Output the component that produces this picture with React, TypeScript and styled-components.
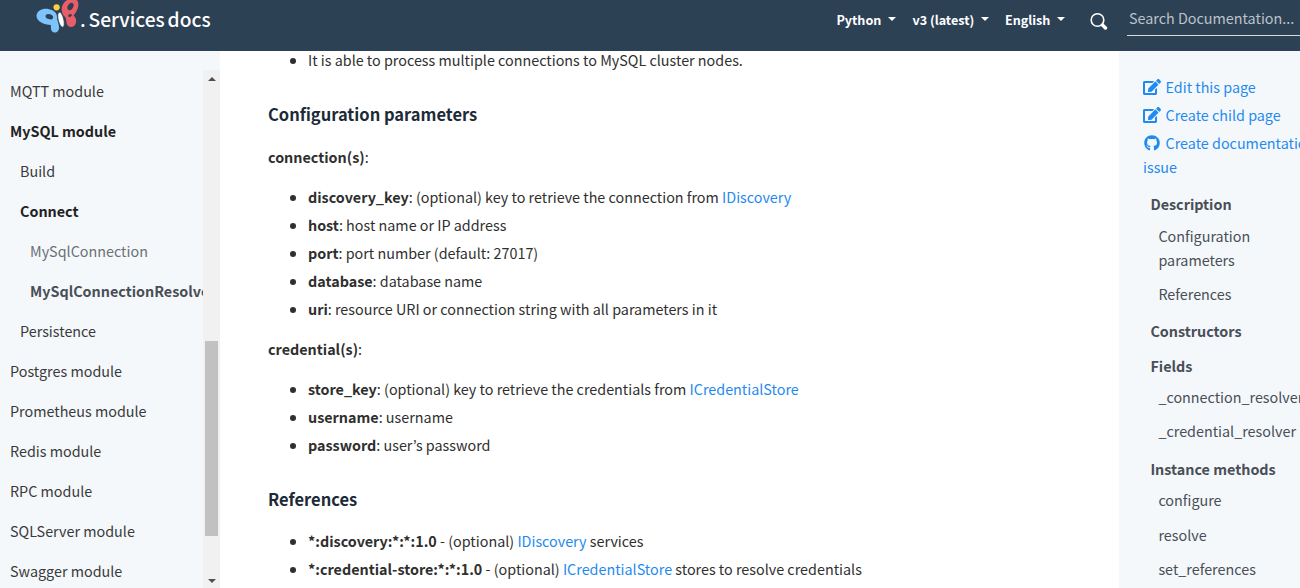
import React from "react";
import styled, { createGlobalStyle } from "styled-components";
import { FaEdit, FaGithub } from "react-icons/fa";

const GlobalStyle = createGlobalStyle`
  * { box-sizing: border-box; }
  body {
    margin: 0;
    overflow: hidden;
    background: #fff;
    color: #2f2f2f;
    font: 400 14.35px/24px "Noto Sans CJK KR", "Noto Sans", sans-serif;
  }
  b { font-weight: 700; }
`;

const Page = styled.div`
  display: flex;
  flex-direction: column;
  width: 1300px;
  height: 588px;
  overflow: hidden;
`;

const Header = styled.header`
  display: flex;
  flex: 0 0 51px;
  align-items: flex-start;
  justify-content: space-between;
  padding-left: 36px;
  background: #2d4155;
  color: #fff;
`;

const Brand = styled.div`
  display: flex;
  align-items: flex-start;
`;

const Logo = styled.svg`
  display: block;
  width: 44px;
  height: 34px;
`;

const BrandName = styled.span`
  font-size: 19.2px;
  font-weight: 500;
  line-height: 24px;
  padding-top: 7px;
  white-space: nowrap;
  word-spacing: -1.5px;
`;

const Tools = styled.div`
  display: flex;
  align-items: flex-start;
  width: 464px;
`;

const Dropdown = styled.div<{ $width: number }>`
  display: flex;
  flex: 0 0 ${(p) => p.$width}px;
  align-items: center;
  padding: 8px 0 0 0.4px;
  font-size: 12.6px;
  font-weight: 700;
  white-space: nowrap;
`;

const Caret = styled.i`
  margin: -2px 0 0 7px;
  border: 4px solid transparent;
  border-top-color: #fff;
  border-bottom: 0;
`;

const SearchIcon = styled.svg`
  flex: none;
  width: 18px;
  height: 18px;
  margin: 12px 19px 0 0;
`;

const SearchField = styled.div`
  flex: 1;
  height: 36px;
  padding: 6px 0 0 2px;
  border-bottom: 1px solid #d5d9dd;
  color: #bcc2c9;
  white-space: nowrap;
`;

const Columns = styled.div`
  display: flex;
  flex: 1;
  min-height: 0;
`;

const Sidebar = styled.aside`
  display: flex;
  flex: 0 0 220px;
  min-width: 0;
  padding-top: 19px;
  background: #f4f8fb;
`;

const NavList = styled.nav`
  flex: 1;
  min-width: 0;
  overflow: hidden;
  padding-top: 1px;
`;

const NavItem = styled.a<{ $level: number; $bold?: boolean }>`
  display: block;
  height: 40px;
  padding-left: ${(p) => 10 + p.$level * 10}px;
  color: ${(p) => (p.$level === 2 ? (p.$bold ? "#494e57" : "#6c7075") : p.$bold ? "#222" : "#3a3a3a")};
  font-weight: ${(p) => (p.$bold ? 700 : 400)};
  line-height: 40px;
  white-space: nowrap;
`;

const Scrollbar = styled.div`
  display: flex;
  flex-direction: column;
  flex: none;
  align-items: center;
  width: 17px;
  background: #f1f1f1;
`;

const Arrow = styled.i<{ $down?: boolean }>`
  margin-top: ${(p) => (p.$down ? "43px" : "7px")};
  border: 4px solid transparent;
  border-${(p) => (p.$down ? "top" : "bottom")}-color: #505050;
  border-${(p) => (p.$down ? "bottom" : "top")}: 0;
`;

const Thumb = styled.div`
  width: 13px;
  height: 195px;
  margin-top: 260px;
  background: #c1c1c1;
`;

const Main = styled.main`
  flex: 1;
  overflow: hidden;
  padding-left: 48px;
`;

const Content = styled.article`
  margin-top: -3px;
`;

const Heading = styled.h3`
  margin: 28px 0 0;
  color: #1d2b38;
  font-size: 16.5px;
  font-weight: 700;
  line-height: 29px;
`;

const Para = styled.p`
  margin: 16px 0;
`;

const List = styled.ul`
  margin: 0;
  padding-left: 40px;
`;

const Item = styled.li`
  margin-bottom: 4px;
  white-space: nowrap;
`;

const References = styled(List)`
  margin-top: 15px;
`;

const Link = styled.a`
  color: #1f8af0;
`;

const Aside = styled.aside`
  flex: 0 0 181px;
  overflow: hidden;
  padding: 24px 0 0 24px;
  background: #f4f8fb;
`;

const Action = styled.a`
  display: block;
  width: 181px;
  margin-bottom: 4px;
  color: #1f8af0;

  svg {
    width: 18px;
    height: 16px;
    margin-right: 4.5px;
    vertical-align: -2px;
  }
`;

const TocEntry = styled.a<{ $title?: boolean; $gap: number }>`
  display: block;
  width: 150px;
  margin-top: ${(p) => p.$gap}px;
  padding-left: ${(p) => (p.$title ? 7.4 : 15.4)}px;
  color: #494e57;
  font-weight: ${(p) => (p.$title ? 700 : 400)};
`;

const nav: { text: string; level: number; bold?: boolean }[] = [
  { text: "MQTT module", level: 0 },
  { text: "MySQL module", level: 0, bold: true },
  { text: "Build", level: 1 },
  { text: "Connect", level: 1, bold: true },
  { text: "MySqlConnection", level: 2 },
  { text: "MySqlConnectionResolver", level: 2, bold: true },
  { text: "Persistence", level: 1 },
  { text: "Postgres module", level: 0 },
  { text: "Prometheus module", level: 0 },
  { text: "Redis module", level: 0 },
  { text: "RPC module", level: 0 },
  { text: "SQLServer module", level: 0 },
  { text: "Swagger module", level: 0 },
];

const toc: { text: string; gap: number; title?: boolean }[] = [
  { text: "Description", gap: 13, title: true },
  { text: "Configuration parameters", gap: 8 },
  { text: "References", gap: 10 },
  { text: "Constructors", gap: 13, title: true },
  { text: "Fields", gap: 11, title: true },
  { text: "_connection_resolver", gap: 7 },
  { text: "_credential_resolver", gap: 10 },
  { text: "Instance methods", gap: 14, title: true },
  { text: "configure", gap: 7 },
  { text: "resolve", gap: 11 },
  { text: "set_references", gap: 10 },
];

export default function App() {
  return (
    <Page>
      <GlobalStyle />
      <Header>
        <Brand>
          <Logo viewBox="0 0 44 34">
            <path
              fill="#7cc4fb"
              d="M.5 15.500C1.500 10 7 8 13 9.200C18 10 21 13 21 17C21 20 22.500 22.500 23 26.500C23.500 30 21.500 32.800 18.500 32.500C15.500 32.200 14.500 29.500 15 25C8 25 0 21 .5 15.500Z"
            />
            <ellipse cx="13.300" cy="16.700" rx="3.900" ry="2.500" fill="#2d4155" transform="rotate(18 13.300 16.700)" />
            <path
              fill="#e85d68"
              d="M27.500 15.500C22.500 7 29-1.500 36.500-1.500C43-1.500 43.500 5 41 10C40 13 38 14.500 37.500 15.500C40.500 18 41 22 39 25C37 27.800 32 27.500 30.800 24C30 21 31 18 27.500 15.500Z"
            />
            <ellipse cx="34.500" cy="6.500" rx="2.700" ry="4" fill="#2d4155" transform="rotate(28 34.500 6.500)" />
            <ellipse cx="34" cy="15.500" rx="2" ry="1.300" fill="#2d4155" transform="rotate(-25 34 15.500)" />
            <circle cx="20.600" cy="7.300" r="3.100" fill="#ffd13e" />
            <ellipse cx="25" cy="19.700" rx="2.800" ry="7.800" fill="#fff" stroke="#2d4155" strokeWidth=".8" transform="rotate(-14 25 19.700)" />
          </Logo>
          <BrandName>. Services docs</BrandName>
        </Brand>
        <Tools>
          <Dropdown $width={76}>Python<Caret /></Dropdown>
          <Dropdown $width={92.5}>v3 (latest)<Caret /></Dropdown>
          <Dropdown $width={85.5}>English<Caret /></Dropdown>
          <SearchIcon viewBox="0 0 18 18" fill="none" stroke="#fff">
            <circle cx="7.500" cy="8" r="6.300" strokeWidth="1.600" />
            <path d="M12.500 13L15.500 16" strokeWidth="3.400" strokeLinecap="round" />
          </SearchIcon>
          <SearchField>Search Documentation...</SearchField>
        </Tools>
      </Header>
      <Columns>
        <Sidebar>
          <NavList>
            {nav.map((n) => (
              <NavItem key={n.text} $level={n.level} $bold={n.bold}>{n.text}</NavItem>
            ))}
          </NavList>
          <Scrollbar>
            <Arrow />
            <Thumb />
            <Arrow $down />
          </Scrollbar>
        </Sidebar>
        <Main>
          <Content>
            <List>
              <Item>It is able to process multiple connections to MySQL cluster nodes.</Item>
            </List>
            <Heading>Configuration parameters</Heading>
            <Para><b>connection(s)</b>:</Para>
            <List>
              <Item><b>discovery_key</b>: (optional) key to retrieve the connection from <Link>IDiscovery</Link></Item>
              <Item><b>host</b>: host name or IP address</Item>
              <Item><b>port</b>: port number (default: 27017)</Item>
              <Item><b>database</b>: database name</Item>
              <Item><b>uri</b>: resource URI or connection string with all parameters in it</Item>
            </List>
            <Para><b>credential(s)</b>:</Para>
            <List>
              <Item><b>store_key</b>: (optional) key to retrieve the credentials from <Link>ICredentialStore</Link></Item>
              <Item><b>username</b>: username</Item>
              <Item><b>password</b>: user’s password</Item>
            </List>
            <Heading>References</Heading>
            <References>
              <Item><b>*:discovery:*:*:1.0</b> - (optional) <Link>IDiscovery</Link> services</Item>
              <Item><b>*:credential-store:*:*:1.0</b> - (optional) <Link>ICredentialStore</Link> stores to resolve credentials</Item>
            </References>
          </Content>
        </Main>
        <Aside>
          <Action><FaEdit />Edit this page</Action>
          <Action><FaEdit />Create child page</Action>
          <Action><FaGithub />Create documentation issue</Action>
          {toc.map((t) => (
            <TocEntry key={t.text} $gap={t.gap} $title={t.title}>{t.text}</TocEntry>
          ))}
        </Aside>
      </Columns>
    </Page>
  );
}
